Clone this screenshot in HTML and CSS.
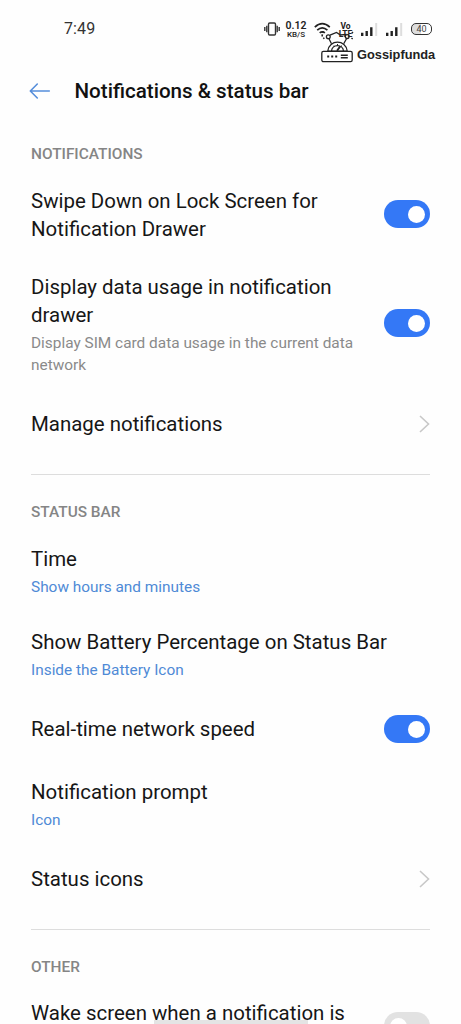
FILE: index.html
```html
<!DOCTYPE html>
<html lang="en">
<head>
<meta charset="utf-8">
<title>Notifications &amp; status bar</title>
<link rel="stylesheet" href="styles.css">
</head>
<body>
<div class="screen">
  <div class="statusbar">
    <span class="clock">7:49</span>
    <div class="indicators">
      <svg class="vibrate" width="16" height="14" viewBox="0 0 16 14" fill="none" stroke="#333" stroke-width="1.4"><rect x="4.5" y="1" width="7" height="12" rx="1.2"/><path d="M2.8 3.8v6.4M.8 5v4M13.2 3.8v6.4M15.2 5v4"/></svg>
      <span class="speed"><b>0.12</b><small>KB/S</small></span>
      <svg class="wifi" width="17" height="15" viewBox="0 0 17 15" fill="none" stroke="#222" stroke-width="1.7"><path d="M.8 5.2Q8.2-1.8 15.8 5.2M3.2 8.2Q8.2 3.4 13.4 8.2M5.7 10.9Q8.2 8.7 10.9 10.9"/><path d="M7.2 12.4h2.2l-1.1 1.3z" fill="#222" stroke="none"/></svg>
      <span class="volte"><b>Vo</b><b>LTE</b></span>
      <svg class="signal" width="17" height="13" viewBox="0 0 17 13"><path fill="#222" d="M0 9.7h2.4V13H0zM4.5 8h2.4v5H4.5zM9.1 4.2h2.4V13H9.1z"/><path fill="#ddd" d="M14.2 0h2v13h-2z"/></svg>
      <svg class="signal second" width="17" height="13" viewBox="0 0 17 13"><path fill="#222" d="M0 9.7h2.4V13H0zM4.5 8h2.4v5H4.5zM9.1 4.2h2.4V13H9.1z"/><path fill="#ddd" d="M14.2 0h2v13h-2z"/></svg>
      <span class="battery">40</span>
    </div>
    <div class="brand">
      <svg width="36" height="35" viewBox="0 0 36 35" fill="none" stroke="#222" stroke-width="1.3">
        <path d="M7.7 22.2c1.2-12 18.4-12 19.6 0zM11.5 22c.5-7.3 11.5-7.3 12 0" fill="#fff"/>
        <path d="M17 21.8l3.2-4.4" stroke-width="1.8"/>
        <path d="M14 16.5v1M17.5 15v1.2M21.5 16.5v1" stroke-width="1"/>
        <rect x="1.8" y="22.3" width="30.4" height="10.4" rx="1.6" fill="#fff"/>
        <path d="M11.5 14.7 9 9.7M23.7 14.7l2.8-5M10 6.2l6.5-2.8 4 2.6 6-.6"/>
        <circle cx="8.3" cy="7.8" r="1.9" fill="#fff"/><circle cx="27.2" cy="7.6" r="1.9" fill="#fff"/>
        <path d="M2.2 5.8v1.6M3.2 9.6l1.2-.8M2 3h1.8M31.8 4.2l1.2-1M31.5 9l1.2 1" stroke-width="1.5"/>
        <path d="M7.2 27.4h2M11.2 27.4h2M15.2 27.4h2" stroke-width="2"/>
        <path d="M20.8 26.3h7M20.8 28.8h7" stroke-width="1.4"/>
      </svg>
      <span>Gossipfunda</span>
    </div>
  </div>

  <header class="header">
    <svg width="22" height="18" viewBox="0 0 22 18" fill="none" stroke="#568edb" stroke-width="1.6" stroke-linecap="round" stroke-linejoin="round"><path d="M8.3 2 1.3 9l7 7M1.5 9H20.3"/></svg>
    <h1>Notifications &amp; status bar</h1>
  </header>

  <h2 class="label label-first">NOTIFICATIONS</h2>
  <div class="row row-swipe"><div class="text"><p class="title swipe-title">Swipe Down on Lock Screen for<br>Notification Drawer</p></div><span class="toggle"></span></div>
  <div class="row row-usage"><div class="text usage-text"><p class="title">Display data usage in notification<br>drawer</p><p class="sub note">Display SIM card data usage in the current data<br>network</p></div><span class="toggle"></span></div>
  <div class="row row-manage"><p class="title">Manage notifications</p><svg class="chevron" width="12" height="20" viewBox="0 0 12 20"><path d="M2 2 10.5 10 2 18"/></svg></div>
  <div class="divider divider-tall"></div>

  <h2 class="label label-status">STATUS BAR</h2>
  <div class="row row-time"><div class="text"><p class="title">Time</p><p class="sub value">Show hours and minutes</p></div></div>
  <div class="row row-pair"><div class="text"><p class="title">Show Battery Percentage on Status Bar</p><p class="sub value">Inside the Battery Icon</p></div></div>
  <div class="row row-single"><p class="title">Real-time network speed</p><span class="toggle"></span></div>
  <div class="row row-pair"><div class="text"><p class="title">Notification prompt</p><p class="sub value">Icon</p></div></div>
  <div class="row row-single"><p class="title">Status icons</p><svg class="chevron" width="12" height="20" viewBox="0 0 12 20"><path d="M2 2 10.5 10 2 18"/></svg></div>
  <div class="divider"></div>

  <h2 class="label label-other">OTHER</h2>
  <div class="row row-wake"><p class="title wake-title">Wake screen when a notification is</p><span class="toggle off"></span></div>
  <div class="gesture"></div>
</div>
</body>
</html>
```
FILE: styles.css
```css
* { box-sizing: border-box; }
body { margin: 0; background: #fefefe; font-family: Roboto, "Liberation Sans", sans-serif; color: #161616; }
h1, h2, p { margin: 0; }
svg { display: block; flex: none; }
.screen { position: relative; width: 461px; height: 1024px; overflow: hidden; display: flex; flex-direction: column; }
.screen > * { flex: none; }

.statusbar { position: relative; height: 60px; padding: 19px 29px 0 64px; display: flex; justify-content: space-between; align-items: flex-start; }
.clock { font-size: 16px; line-height: 20px; letter-spacing: .1px; color: #333; }
.indicators { position: relative; z-index: 1; display: flex; align-items: center; height: 20px; color: #222; }
.speed { display: flex; flex-direction: column; align-items: center; width: 22px; margin-left: 5px; }
.speed b { font-size: 10.5px; line-height: 10px; font-weight: 600; }
.speed small { font-size: 8px; line-height: 7px; font-weight: 500; }
.wifi { margin-left: 7px; }
.volte { display: flex; flex-direction: column; align-items: center; width: 17px; margin: 2px 0 0 6px; font-size: 8.5px; line-height: 8px; }
.signal { margin-left: 7px; }
.signal.second { margin-left: 8px; }
.battery { width: 21px; height: 12px; margin-left: 8px; border: 1.5px solid #333; border-radius: 5px; background: linear-gradient(90deg, #ddd 45%, #fff 45%); font-size: 9px; line-height: 10px; text-align: center; color: #444; }
.brand { position: absolute; left: 320px; top: 29px; display: flex; align-items: flex-end; color: #222; }
.brand span { margin: 0 0 1px 1px; font: bold 12.8px/16px "Liberation Sans", sans-serif; }

.header { height: 62px; padding-left: 29px; display: flex; align-items: center; gap: 23.5px; }
.header h1 { font-size: 20.6px; line-height: 28px; font-weight: 500; color: #111; }

.label { padding: 1px 0 0 31px; display: flex; align-items: center; font-size: 15.4px; line-height: 18px; font-weight: 500; color: #858585; }
.label-first { height: 62px; }
.label-status { height: 18px; }
.label-other { height: 60px; }

.row { padding: 0 31px; display: flex; align-items: center; justify-content: space-between; }
.title { font-size: 20.45px; line-height: 28px; white-space: nowrap; }
.sub { font-size: 15.4px; line-height: 22px; white-space: nowrap; }
.note { margin-top: 3px; color: #8a8a8a; }
.value { margin-top: 3px; color: #4f8ad6; }
.row-swipe { height: 60px; }
.swipe-title { padding-top: 2px; }
.row-usage { height: 158px; }
.usage-text { padding-top: 2px; }
.row-manage { height: 44px; }
.row-time { height: 102px; }
.row-pair { height: 64px; }
.row-single { height: 86px; }
.row-wake { align-items: flex-start; padding-top: 4px; height: 60px; }
.wake-title { line-height: 27px; }

.toggle { flex: none; width: 46px; height: 28px; padding: 5.5px; border-radius: 14px; background: #3478f6; display: flex; justify-content: flex-end; }
.toggle::before { content: ""; width: 17px; height: 17px; border-radius: 50%; background: #fff; }
.toggle.off { margin-top: 12px; background: #e2e2e2; justify-content: flex-start; }
.chevron { fill: none; stroke: #c8c8c8; stroke-width: 1.6; }
.divider { height: 14px; padding: 0 31px; display: flex; align-items: center; }
.divider-tall { height: 56px; }
.divider::before { content: ""; flex: 1; height: 1px; background: #ddd; }
.gesture { position: absolute; z-index: -1; left: 154px; top: 1020px; width: 154px; height: 4px; background: #e4e4e4; }
```
